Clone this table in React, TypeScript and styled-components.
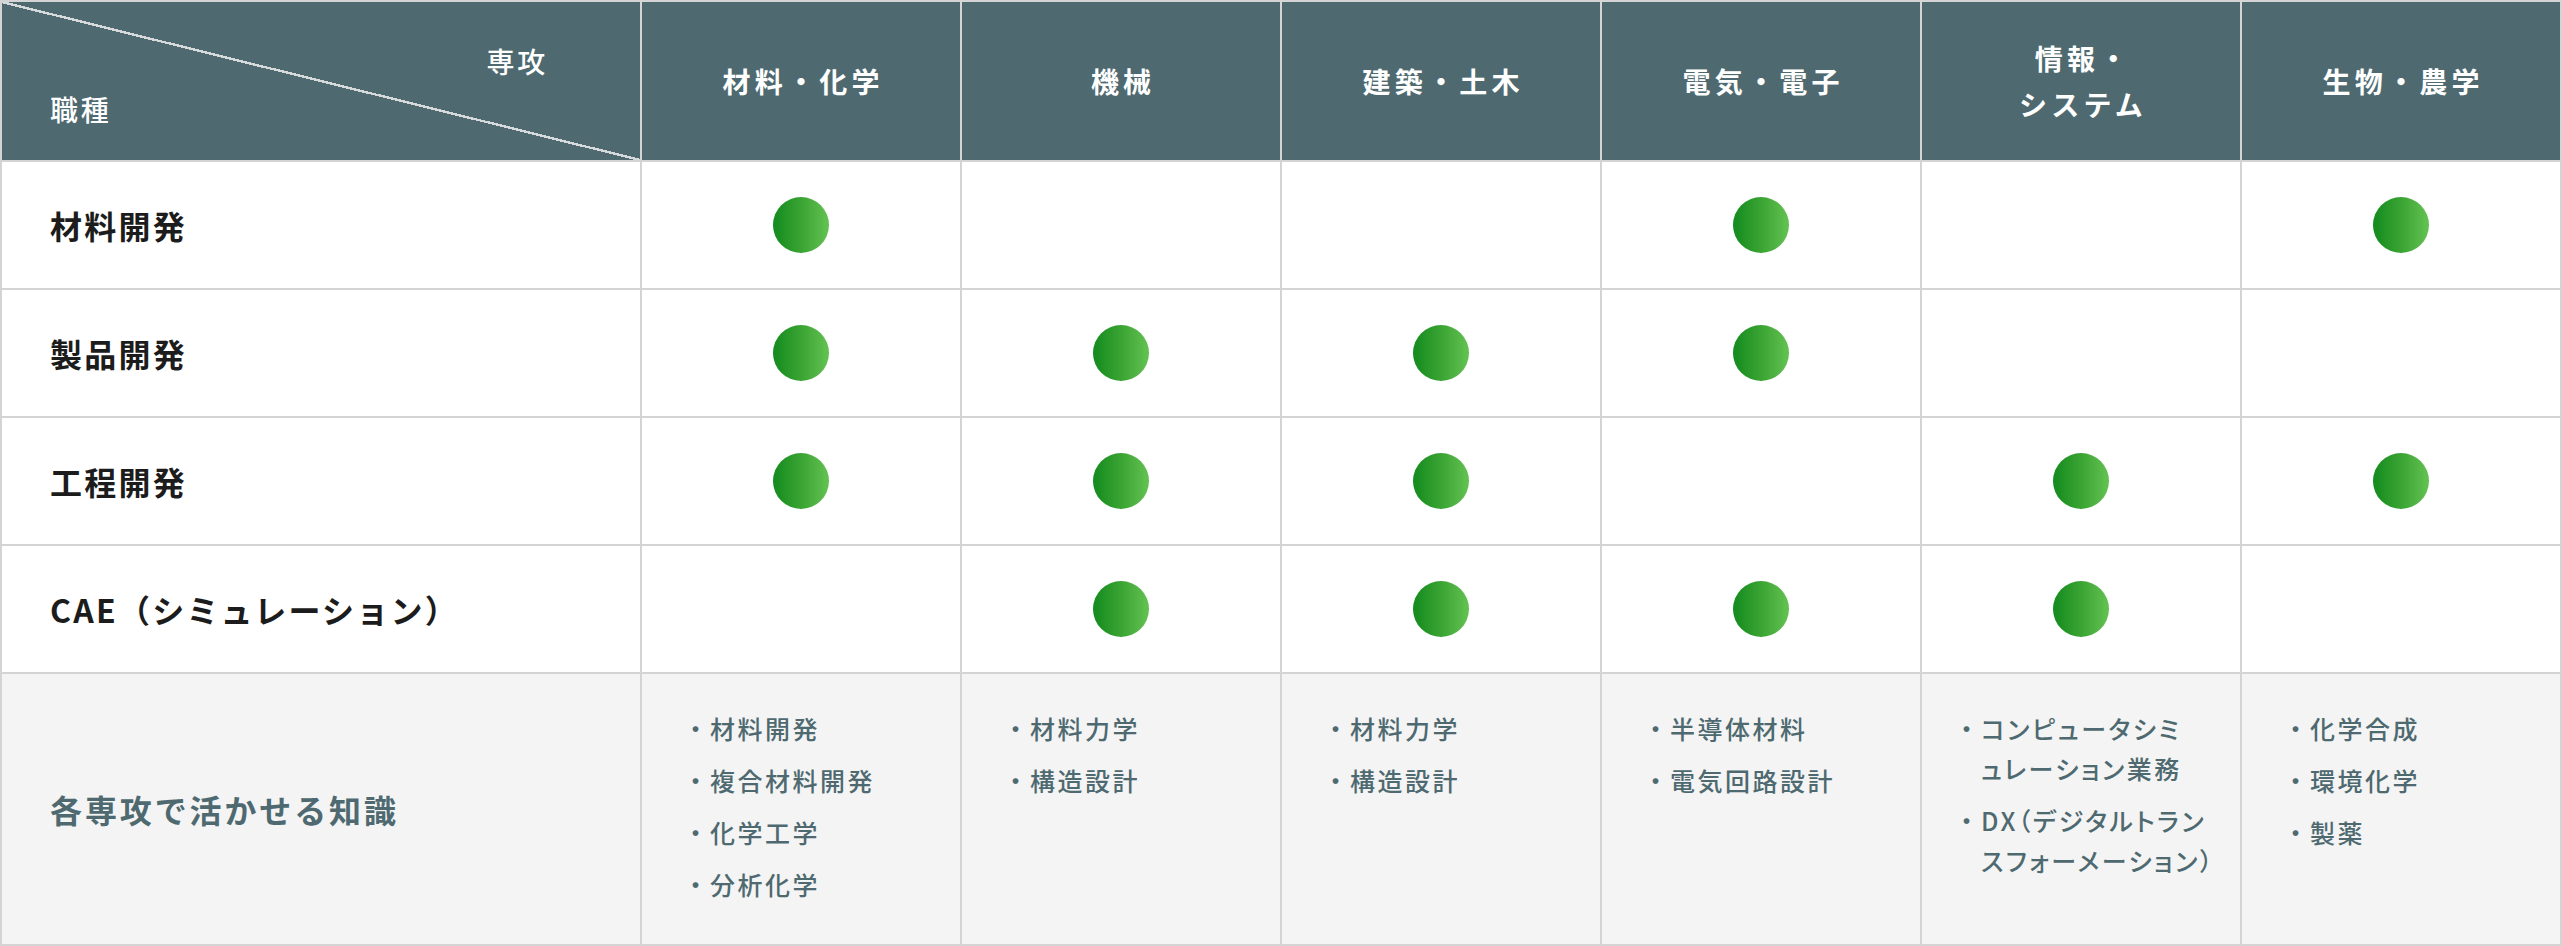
import React from "react";
import styled, { createGlobalStyle } from "styled-components";

const GlobalStyle = createGlobalStyle`
  html, body { margin: 0; padding: 0; background: #ffffff; }
  body { font-family: "Noto Sans CJK JP", "Noto Sans", sans-serif; }
  #root { width: 2562px; }
`;

const HEADER_BG = "#4e6a70";
const LINE = "#d4d4d4";

const Grid = styled.div`
  display: grid;
  grid-template-columns: 638px repeat(6, 318px);
  grid-template-rows: 158px repeat(4, 126px) 270px;
  gap: 2px;
  padding: 2px;
  width: 2562px;
  box-sizing: border-box;
  background: ${LINE};
`;

const Corner = styled.div`
  display: flex;
  flex-direction: column;
  gap: 2px;
  padding: 36px 92px 0 48px;
  color: #ffffff;
  font-size: 28px;
  font-weight: 500;
  line-height: 46px;
  letter-spacing: 0.1em;
  background:
    linear-gradient(
      to top right,
      transparent calc(50% - 1.2px),
      #d6dadb calc(50% - 1.2px),
      #d6dadb calc(50% + 1.2px),
      transparent calc(50% + 1.2px)
    ),
    ${HEADER_BG};
`;

const CornerText = styled.span<{ $end?: boolean }>`
  align-self: ${(p) => (p.$end ? "flex-end" : "flex-start")};
`;

const HeadCell = styled.div`
  display: flex;
  align-items: center;
  justify-content: center;
  background: ${HEADER_BG};
  color: #ffffff;
  font-size: 28px;
  font-weight: 700;
  line-height: 1.65;
  letter-spacing: 0.15em;
  text-align: center;
`;

const HeadLabel = styled.span`
  padding-left: 0.15em;
`;

const RowLabel = styled.div<{ $muted?: boolean }>`
  display: flex;
  align-items: center;
  padding-left: 48px;
  background: ${(p) => (p.$muted ? "#f4f4f4" : "#ffffff")};
  color: ${(p) => (p.$muted ? HEADER_BG : "#1c1c1c")};
  font-size: 32px;
  font-weight: 700;
  letter-spacing: ${(p) => (p.$muted ? "0.09em" : "0.07em")};
`;

const MarkCell = styled.div`
  display: flex;
  align-items: center;
  justify-content: center;
  background: #ffffff;
`;

const Dot = styled.span`
  display: block;
  width: 56px;
  height: 56px;
  border-radius: 50%;
  background: linear-gradient(90deg, #148a1e 0%, #3aa433 50%, #64c252 100%);
`;

const KnowledgeCell = styled.div<{ $wide?: boolean }>`
  background: #f4f4f4;
  padding: 34px 12px 0 ${(p) => (p.$wide ? "32px" : "41px")};
`;

const List = styled.ul`
  list-style: none;
  margin: 0;
  padding: 0;
  display: flex;
  flex-direction: column;
  gap: 12px;
`;

const Item = styled.li`
  display: flex;
  color: ${HEADER_BG};
  font-size: 25px;
  font-weight: 500;
  line-height: 40px;
  letter-spacing: 0.08em;
`;

const Bullet = styled.span`
  flex: none;
`;

const ItemText = styled.span`
  white-space: nowrap;
  font-feature-settings: "palt";
  letter-spacing: 0.1em;
`;

const majors: React.ReactNode[] = [
  "材料・化学",
  "機械",
  "建築・土木",
  "電気・電子",
  <>
    情報・
    <br />
    システム
  </>,
  "生物・農学",
];

const jobs: { name: string; marks: boolean[] }[] = [
  { name: "材料開発", marks: [true, false, false, true, false, true] },
  { name: "製品開発", marks: [true, true, true, true, false, false] },
  { name: "工程開発", marks: [true, true, true, false, true, true] },
  { name: "CAE（シミュレーション）", marks: [false, true, true, true, true, false] },
];

const knowledge: React.ReactNode[][] = [
  ["材料開発", "複合材料開発", "化学工学", "分析化学"],
  ["材料力学", "構造設計"],
  ["材料力学", "構造設計"],
  ["半導体材料", "電気回路設計"],
  [
    <>
      コンピュータシミ
      <br />
      ュレーション業務
    </>,
    <>
      DX（デジタルトラン
      <br />
      スフォーメーション）
    </>,
  ],
  ["化学合成", "環境化学", "製薬"],
];

export default function App() {
  return (
    <>
      <GlobalStyle />
      <Grid>
        <Corner>
          <CornerText $end>専攻</CornerText>
          <CornerText>職種</CornerText>
        </Corner>
        {majors.map((m, i) => (
          <HeadCell key={`h${i}`}>
            <HeadLabel>{m}</HeadLabel>
          </HeadCell>
        ))}

        {jobs.map((job) => (
          <React.Fragment key={job.name}>
            <RowLabel>{job.name}</RowLabel>
            {job.marks.map((on, i) => (
              <MarkCell key={`${job.name}-${i}`}>{on && <Dot />}</MarkCell>
            ))}
          </React.Fragment>
        ))}

        <RowLabel $muted>各専攻で活かせる知識</RowLabel>
        {knowledge.map((items, i) => (
          <KnowledgeCell key={`k${i}`} $wide={i === 4}>
            <List>
              {items.map((it, j) => (
                <Item key={j}>
                  <Bullet>・</Bullet>
                  <ItemText>{it}</ItemText>
                </Item>
              ))}
            </List>
          </KnowledgeCell>
        ))}
      </Grid>
    </>
  );
}
